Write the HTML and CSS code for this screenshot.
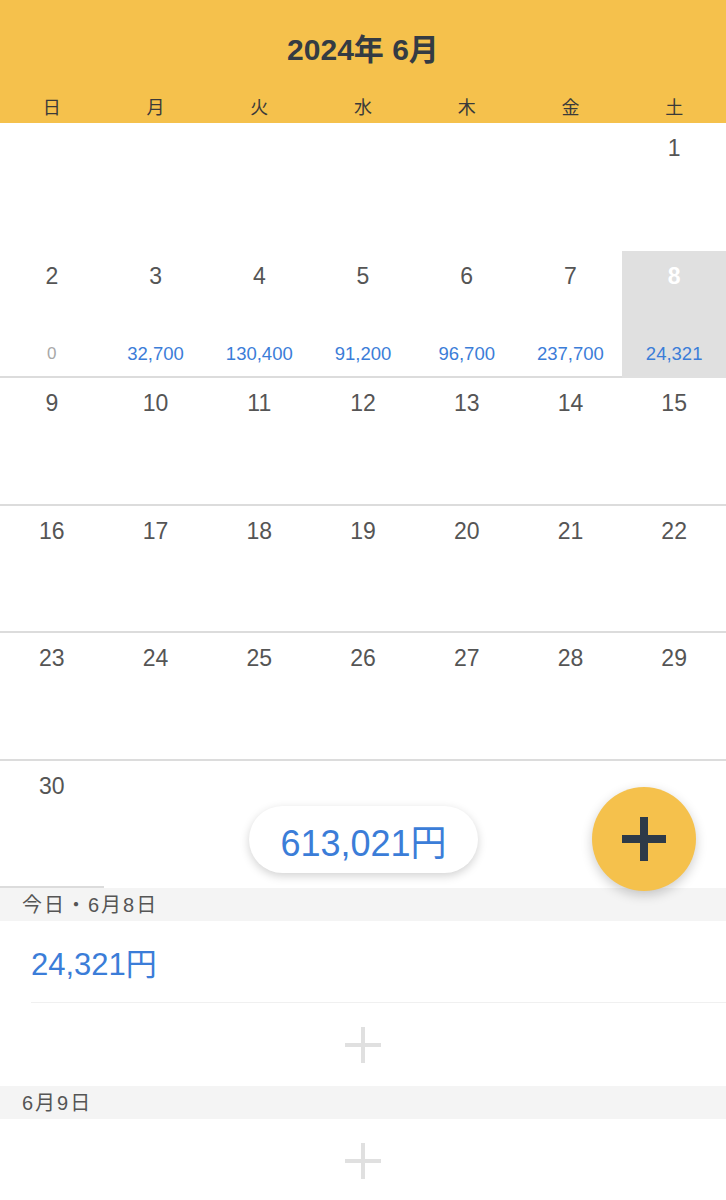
FILE: index.html
```html
<!DOCTYPE html>
<html lang="ja">
<head>
    <meta charset="UTF-8">
    <meta name="viewport" content="width=device-width, initial-scale=1.0">
    <title>カレンダー</title>
    <link rel="stylesheet" href="styles.css">
</head>
<body>
    <div class="header">
        <h1 class="month-title">2024年 6月</h1>
        <div class="weekdays">
            <span>日</span><span>月</span><span>火</span><span>水</span><span>木</span><span>金</span><span>土</span>
        </div>
    </div>

    <div class="calendar-wrap">
        <div class="calendar">
            <!-- week 1 -->
            <div class="cell first"></div>
            <div class="cell first"></div>
            <div class="cell first"></div>
            <div class="cell first"></div>
            <div class="cell first"></div>
            <div class="cell first"></div>
            <div class="cell first"><span class="day">1</span></div>

            <!-- week 2 -->
            <div class="cell"><span class="day">2</span><span class="amount zero">0</span></div>
            <div class="cell"><span class="day">3</span><span class="amount">32,700</span></div>
            <div class="cell"><span class="day">4</span><span class="amount">130,400</span></div>
            <div class="cell"><span class="day">5</span><span class="amount">91,200</span></div>
            <div class="cell"><span class="day">6</span><span class="amount">96,700</span></div>
            <div class="cell"><span class="day">7</span><span class="amount">237,700</span></div>
            <div class="cell today"><span class="day">8</span><span class="amount">24,321</span></div>

            <!-- week 3 -->
            <div class="cell"><span class="day">9</span></div>
            <div class="cell"><span class="day">10</span></div>
            <div class="cell"><span class="day">11</span></div>
            <div class="cell"><span class="day">12</span></div>
            <div class="cell"><span class="day">13</span></div>
            <div class="cell"><span class="day">14</span></div>
            <div class="cell"><span class="day">15</span></div>

            <!-- week 4 -->
            <div class="cell"><span class="day">16</span></div>
            <div class="cell"><span class="day">17</span></div>
            <div class="cell"><span class="day">18</span></div>
            <div class="cell"><span class="day">19</span></div>
            <div class="cell"><span class="day">20</span></div>
            <div class="cell"><span class="day">21</span></div>
            <div class="cell"><span class="day">22</span></div>

            <!-- week 5 -->
            <div class="cell"><span class="day">23</span></div>
            <div class="cell"><span class="day">24</span></div>
            <div class="cell"><span class="day">25</span></div>
            <div class="cell"><span class="day">26</span></div>
            <div class="cell"><span class="day">27</span></div>
            <div class="cell"><span class="day">28</span></div>
            <div class="cell"><span class="day">29</span></div>

            <!-- week 6 -->
            <div class="cell"><span class="day">30</span></div>
        </div>

        <div class="total-pill">613,021円</div>
        <button class="fab" aria-label="追加">
            <svg width="44" height="44" viewBox="0 0 44 44">
                <rect x="0" y="18" width="44" height="8" fill="#2d3a48"/>
                <rect x="18" y="0" width="8" height="44" fill="#2d3a48"/>
            </svg>
        </button>
    </div>

    <div class="list">
        <div class="section-head">今日・6月8日</div>
        <div class="entry"><span class="entry-amount">24,321円</span></div>
        <div class="add-row">
            <svg width="36" height="36" viewBox="0 0 36 36">
                <rect x="0" y="16" width="36" height="4" fill="#e0e0e0"/>
                <rect x="16" y="0" width="4" height="36" fill="#e0e0e0"/>
            </svg>
        </div>

        <div class="section-head">6月9日</div>
        <div class="add-row">
            <svg width="36" height="36" viewBox="0 0 36 36">
                <rect x="0" y="16" width="36" height="4" fill="#e0e0e0"/>
                <rect x="16" y="0" width="4" height="36" fill="#e0e0e0"/>
            </svg>
        </div>
    </div>
</body>
</html>
```

FILE: styles.css
```css
/* calendar page */
body {
    margin: 0;
    font-family: "Liberation Sans", "Noto Sans CJK JP", sans-serif;
    background: #ffffff;
    color: #555555;
    overflow: hidden;
}

.header {
    background-color: #f5c14c;
    height: 123px;
    display: flex;
    flex-direction: column;
}

.month-title {
    margin: 0;
    padding-top: 33px;
    height: 62px;
    line-height: 34px;
    text-align: center;
    font-size: 30px;
    font-weight: bold;
    color: #343b43;
    box-sizing: border-box;
}

.weekdays {
    display: grid;
    grid-template-columns: repeat(7, 1fr);
    padding-top: 35px;
    font-size: 18px;
    line-height: 22px;
    color: #3a3a3a;
    text-align: center;
}

.calendar-wrap {
    position: relative;
}

.calendar {
    display: grid;
    grid-template-columns: repeat(7, 1fr);
    grid-auto-rows: 127.5px;
}

.cell {
    display: flex;
    flex-direction: column;
    align-items: center;
    border-bottom: 2px solid #dcdcdc;
    box-sizing: border-box;
}

.cell.first {
    border-bottom: none;
}

.day {
    padding-top: 12px;
    font-size: 23px;
    line-height: 26px;
    color: #555555;
}

.amount {
    margin-top: auto;
    margin-bottom: 11px;
    font-size: 18.5px;
    line-height: 22px;
    color: #3b7dd8;
}

.amount.zero {
    color: #a8a8a8;
    font-size: 17px;
}

.today {
    background-color: #e0e0e0;
    border-bottom-color: #e0e0e0;
}

.today .day {
    color: #ffffff;
    font-weight: bold;
}

.total-pill {
    position: absolute;
    left: 249px;
    top: 683px;
    width: 229px;
    height: 67px;
    border-radius: 34px;
    background: #ffffff;
    box-shadow: 0 3px 10px rgba(0, 0, 0, 0.18);
    display: flex;
    align-items: center;
    justify-content: center;
    font-size: 36px;
    color: #3b7dd8;
}

.fab {
    position: absolute;
    left: 592px;
    top: 664px;
    width: 104px;
    height: 104px;
    border: none;
    border-radius: 50%;
    background-color: #f5c14c;
    box-shadow: 0 4px 12px rgba(0, 0, 0, 0.2);
    display: flex;
    align-items: center;
    justify-content: center;
    padding: 0;
    z-index: 2;
}

.list {
    display: flex;
    flex-direction: column;
}

.section-head {
    background-color: #f4f4f4;
    height: 33px;
    line-height: 35px;
    padding-left: 22px;
    font-size: 20px;
    letter-spacing: 2px;
    color: #555555;
}

.entry {
    height: 82px;
    margin-left: 31px;
    border-bottom: 1px solid #f0f0f0;
    display: flex;
    align-items: center;
    box-sizing: border-box;
}

.entry-amount {
    font-size: 31px;
    color: #3b7dd8;
}

.add-row {
    height: 83px;
    display: flex;
    align-items: center;
    justify-content: center;
}
```
